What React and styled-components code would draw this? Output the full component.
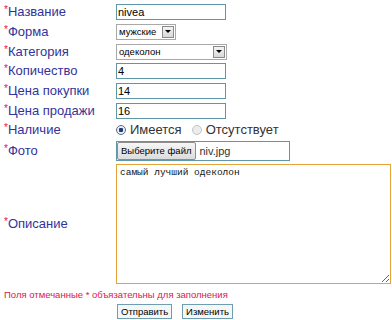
import React from "react";
import styled, { createGlobalStyle } from "styled-components";

const GlobalStyle = createGlobalStyle`
  body {
    margin: 0;
    padding: 0;
    background: #fff;
    font-family: "Liberation Sans", Arial, sans-serif;
  }
`;

const Form = styled.form`
  padding: 4px 0 0 4px;
  width: 388px;
`;

const Grid = styled.div`
  display: grid;
  grid-template-columns: 112px 1fr;
  row-gap: 3.8px;
  align-items: center;
`;

const Label = styled.label`
  font-size: 13px;
  color: #333399;
  line-height: 14px;
  &::before {
    content: "*";
    color: #e0144c;
    font-size: 10px;
    vertical-align: top;
    line-height: 10px;
  }
`;

const TextInput = styled.input`
  box-sizing: border-box;
  width: ${(p) => p.$width || 110}px;
  height: 16px;
  margin: 0;
  padding: 0 1px;
  border: 1px solid #5f97a8;
  font-family: "Liberation Sans", Arial, sans-serif;
  font-size: 11px;
  color: #000;
  outline: none;
`;

const Select = styled.div`
  box-sizing: border-box;
  width: ${(p) => p.$width}px;
  height: 16px;
  border: 1px solid #a9a9a9;
  display: flex;
  align-items: center;
  justify-content: space-between;
  font-size: 9.5px;
  padding-left: 2px;
  color: #000;
`;

const Arrow = styled.span`
  width: 12px;
  height: 12px;
  margin-right: 1px;
  box-sizing: border-box;
  border: 1px solid #8a8a8a;
  background: linear-gradient(#f4f4f4, #d8d8d8);
  display: flex;
  align-items: center;
  justify-content: center;
  &::after {
    content: "";
    border-left: 3px solid transparent;
    border-right: 3px solid transparent;
    border-top: 3px solid #000;
  }
`;

const RadioRow = styled.div`
  display: flex;
  align-items: center;
  gap: 10px;
  font-size: 13px;
  color: #333;
  height: 14px;
`;

const Radio = styled.span`
  display: flex;
  align-items: center;
  gap: 4px;
  &::before {
    content: "";
    width: 8px;
    height: 8px;
    border-radius: 50%;
    border: 1px solid ${(p) => (p.$checked ? "#5a6d8a" : "#c4c4c4")};
    background: ${(p) =>
      p.$checked
        ? "radial-gradient(circle, #1f3b70 0 2px, #e8eef6 2.5px)"
        : "#ececec"};
  }
`;

const FileBox = styled.div`
  box-sizing: border-box;
  width: 174px;
  height: 20px;
  border: 1px solid #5f97a8;
  display: flex;
  align-items: center;
  gap: 4px;
  font-size: 11px;
  color: #333;
`;

const FileButton = styled.span`
  box-sizing: border-box;
  height: 18px;
  padding: 0 3px;
  display: flex;
  align-items: center;
  border: 1px solid #8e8e8e;
  border-radius: 2px;
  background: linear-gradient(#f6f6f6, #dcdcdc);
  font-size: 9.5px;
  color: #000;
`;

const TextArea = styled.textarea`
  box-sizing: border-box;
  width: 275px;
  height: 120px;
  margin: 0;
  padding: 2px 3px;
  border: 1px solid #e8a23a;
  font-family: "Liberation Mono", "Courier New", monospace;
  font-size: 9.5px;
  color: #111;
  outline: none;
  resize: both;
  display: block;
`;

const Note = styled.p`
  margin: 5px 0 0;
  font-size: 9.5px;
  line-height: 12px;
  color: #e0144c;
`;

const Buttons = styled.div`
  display: flex;
  gap: 10px;
  margin: 3px 0 0 113px;
`;

const Button = styled.button`
  box-sizing: border-box;
  height: 15px;
  padding: 0 3px;
  border: 1px solid #6f9fae;
  background: #f4f6f7;
  font-family: "Liberation Sans", Arial, sans-serif;
  font-size: 9.5px;
  color: #000;
  line-height: 12px;
`;

export default function App() {
  return (
    <>
      <GlobalStyle />
      <Form onSubmit={(e) => e.preventDefault()}>
        <Grid>
          <Label>Название</Label>
          <TextInput defaultValue="nivea" />
          <Label>Форма</Label>
          <Select $width={60}>
            мужские
            <Arrow />
          </Select>
          <Label>Категория</Label>
          <Select $width={111}>
            одеколон
            <Arrow />
          </Select>
          <Label>Копичество</Label>
          <TextInput defaultValue="4" />
          <Label>Цена покупки</Label>
          <TextInput defaultValue="14" />
          <Label>Цена продажи</Label>
          <TextInput defaultValue="16" />
          <Label>Наличие</Label>
          <RadioRow>
            <Radio $checked>Имеется</Radio>
            <Radio>Отсутствует</Radio>
          </RadioRow>
          <Label>Фото</Label>
          <FileBox>
            <FileButton>Выберите файл</FileButton>
            niv.jpg
          </FileBox>
          <Label>Описание</Label>
          <TextArea defaultValue="самый лучший одеколон" />
        </Grid>
        <Note>Поля отмечанные * объязательны для заполнения</Note>
        <Buttons>
          <Button type="submit">Отправить</Button>
          <Button type="button">Изменить</Button>
        </Buttons>
      </Form>
    </>
  );
}
